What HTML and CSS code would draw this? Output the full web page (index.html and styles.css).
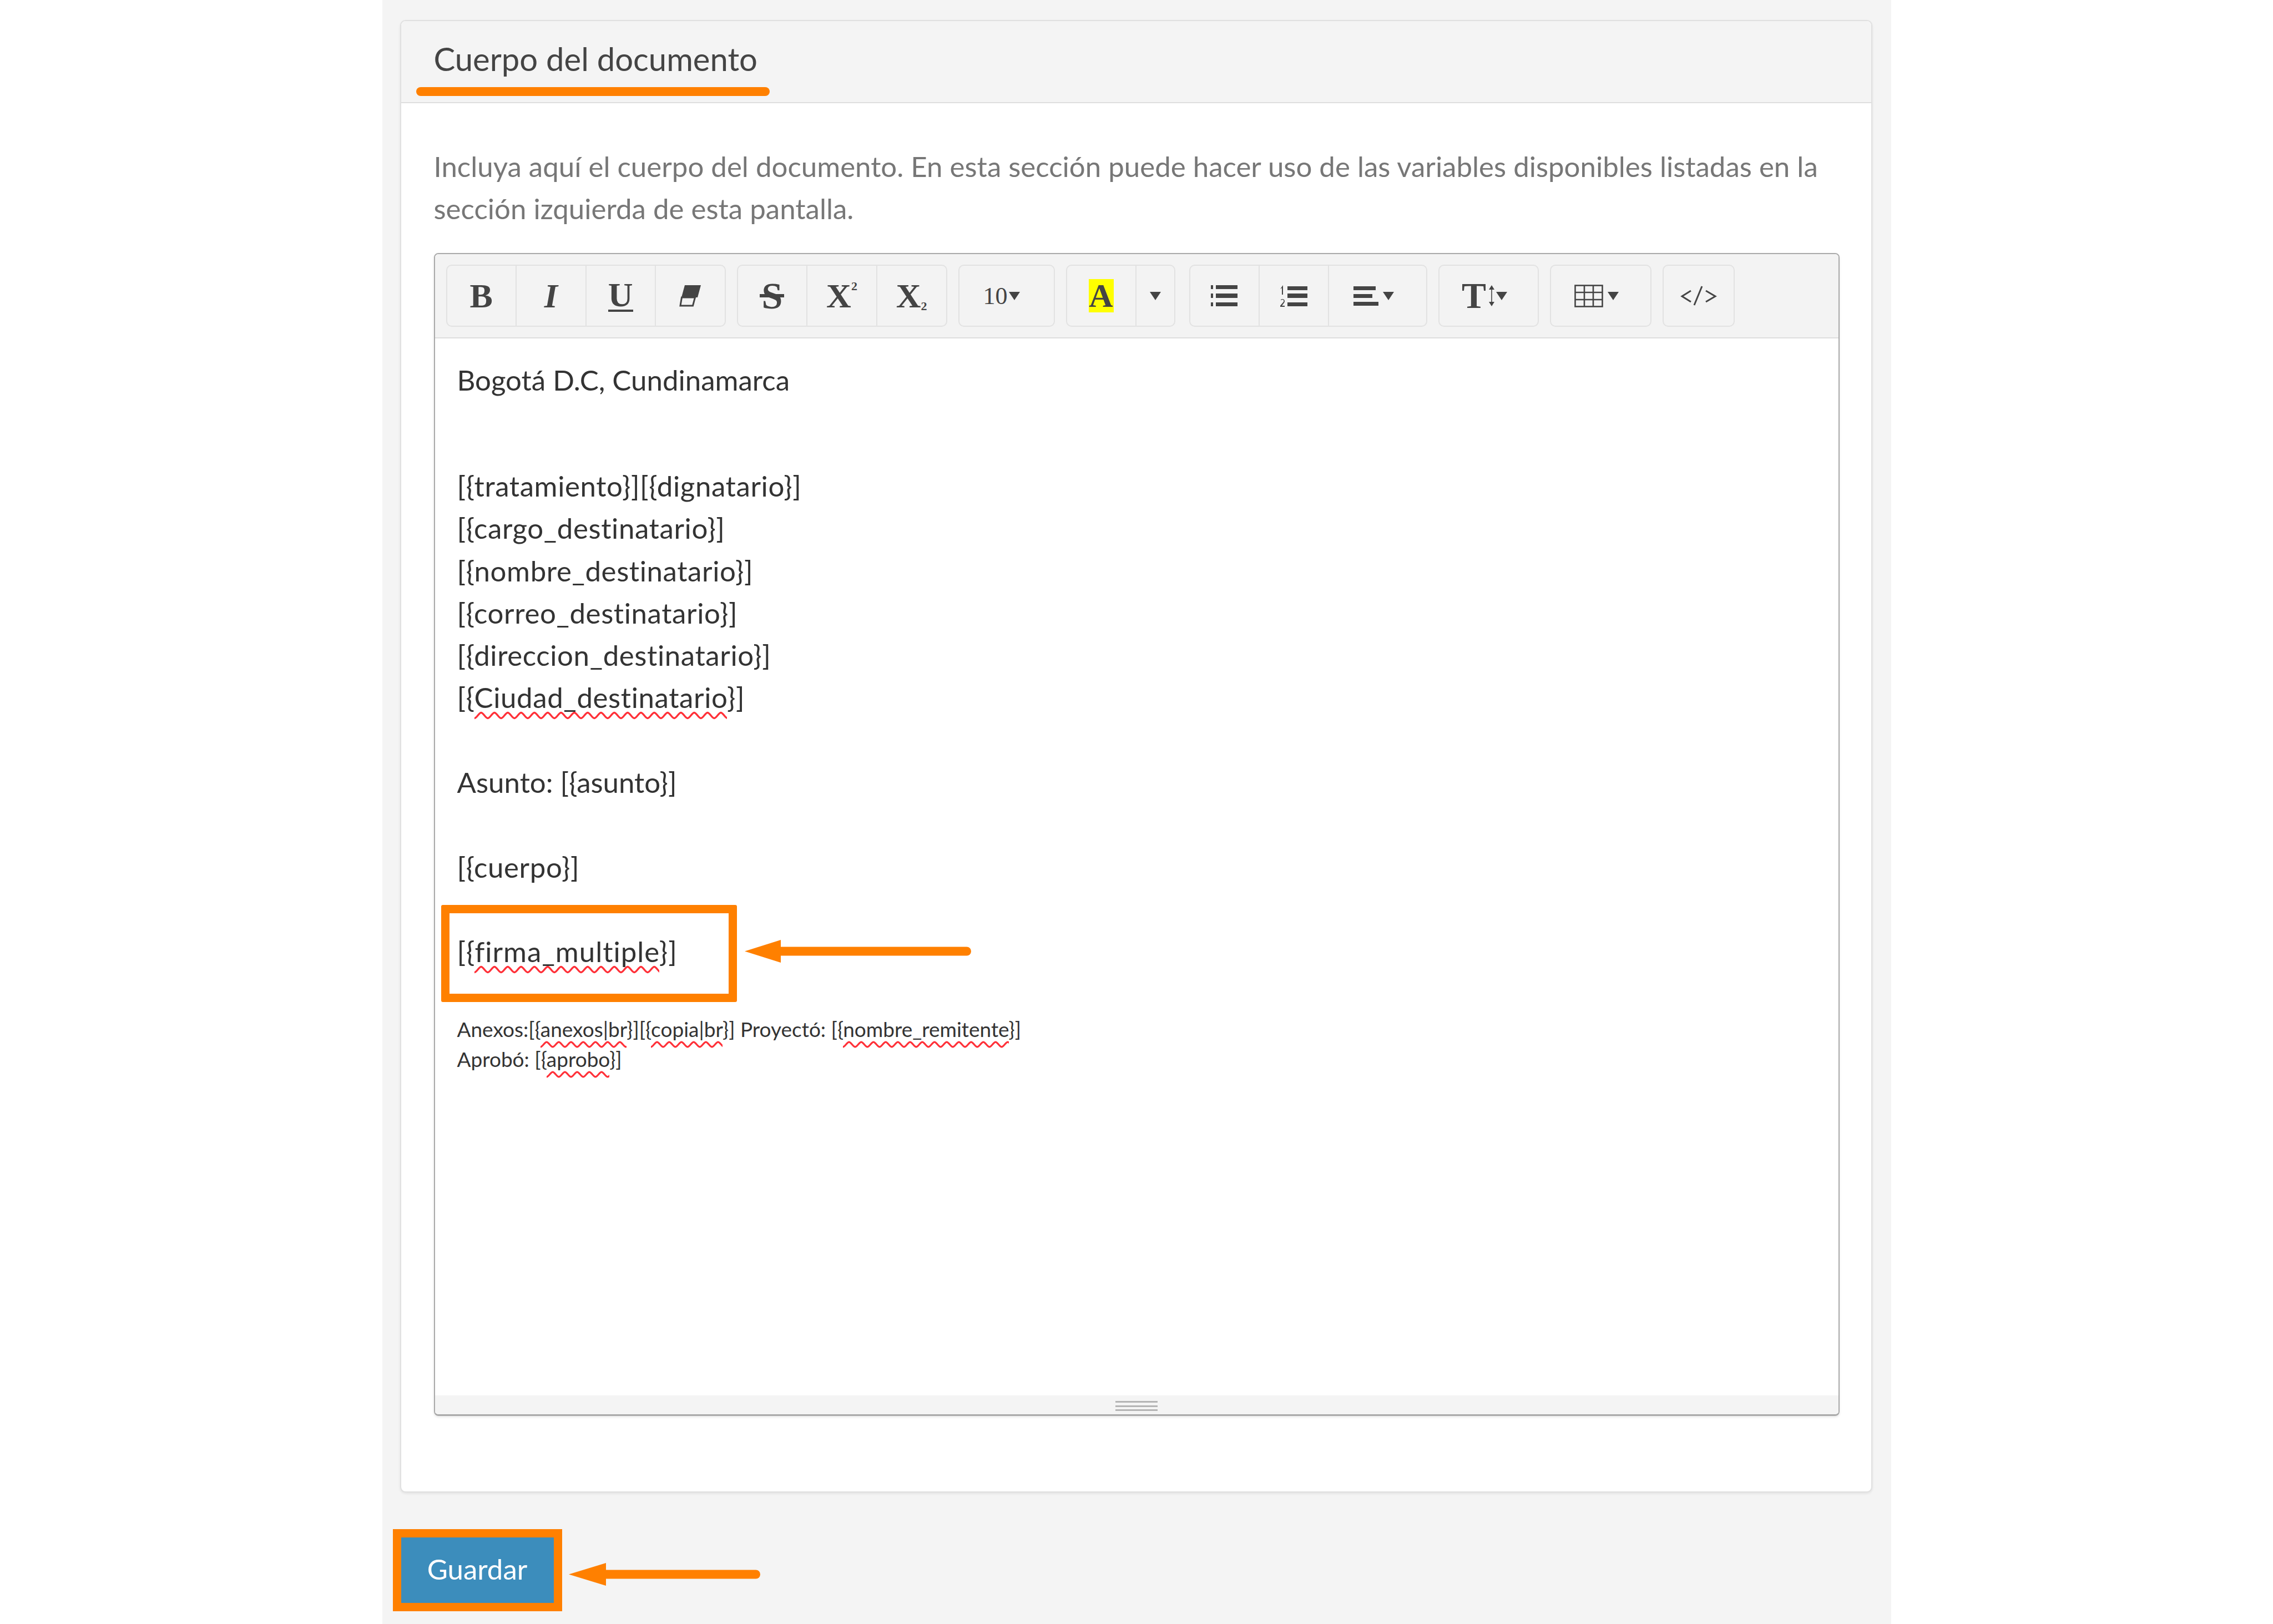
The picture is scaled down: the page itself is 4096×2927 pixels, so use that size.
FILE: index.html
```html
<!DOCTYPE html>
<html lang="es">
<head>
<meta charset="utf-8">
<title>Cuerpo del documento</title>
<link rel="stylesheet" href="styles.css">
</head>
<body>
<main class="page">
  <section class="card">
    <header class="card-head">
      <h2 class="card-title">Cuerpo del documento</h2>
      <span class="title-mark"></span>
    </header>
    <div class="card-body">
      <p class="help">Incluya aquí el cuerpo del documento. En esta sección puede hacer uso de las variables disponibles listadas en la sección izquierda de esta pantalla.</p>
      <div class="editor">
        <div class="toolbar">
          <div class="group g1">
            <button class="btn glyph">B</button>
            <button class="btn glyph italic">I</button>
            <button class="btn glyph"><span class="under">U</span></button>
            <button class="btn"><svg width="40" height="40" viewBox="0 0 40 40"><path d="M10 1h29l-6 22H4z" fill="#444"/><path d="M4.500 23h24l-4 15H2z" fill="none" stroke="#444" stroke-width="3"/></svg></button>
          </div>
          <div class="group g2">
            <button class="btn glyph"><span class="strike">S</span></button>
            <button class="btn glyph x">X<span class="sup">2</span></button>
            <button class="btn glyph x">X<span class="sub">2</span></button>
          </div>
          <div class="group g3">
            <button class="btn small-num">10<i class="caret"></i></button>
          </div>
          <div class="group g4">
            <button class="btn hl-btn"><span class="hl">A</span></button>
            <button class="btn hl-drop"><i class="caret"></i></button>
          </div>
          <div class="group g5">
            <button class="btn fixed"><svg width="48" height="40" viewBox="0 0 48 40" fill="#444"><rect x="0" y="1" width="4" height="7"/><rect x="9" y="1" width="39" height="7"/><rect x="0" y="16" width="4" height="8"/><rect x="9" y="16" width="39" height="8"/><rect x="0" y="32" width="4" height="7"/><rect x="9" y="32" width="39" height="7"/></svg></button>
            <button class="btn fixed"><svg width="50" height="40" viewBox="0 0 50 40" fill="#444"><path d="M6 1v17H4V6L1 8z"/><path d="M1 40v-2l6-7c1-2 0-4-2-4l-3 1v-1c3-2 7-1 7 3 0 2-2 4-5 8h5v2z"/><rect x="14" y="3" width="36" height="7"/><rect x="14" y="16" width="36" height="8"/><rect x="14" y="32" width="36" height="7"/></svg></button>
            <button class="btn pad-r"><svg width="45" height="37" viewBox="0 0 45 37" fill="#444"><rect x="0" y="1" width="40" height="7"/><rect x="0" y="15" width="34" height="7"/><rect x="0" y="29" width="45" height="7"/></svg><i class="caret"></i></button>
          </div>
          <div class="group g6">
            <button class="btn height-btn pad-r"><span class="tee">T</span><svg width="12" height="40" viewBox="0 0 12 40"><path d="M6 1l5 8H1zM6 39l-5-8h10z" fill="#444"/><path d="M6 5v30" stroke="#444" stroke-width="1.6"/></svg><i class="caret"></i></button>
          </div>
          <div class="group g7">
            <button class="btn pad-r"><svg width="52" height="41" viewBox="0 0 52 41" fill="none" stroke="#444" stroke-width="2.6"><rect x="1.5" y="1.5" width="49" height="38"/><path d="M1.500 14h49M1.500 27h49M18 1.500v38M34 1.500v38"/></svg><i class="caret"></i></button>
          </div>
          <div class="group g8">
            <button class="btn"><svg width="66" height="36" viewBox="0 0 66 36" fill="none" stroke="#444" stroke-width="3"><path d="M19 9L3 19l16 10M46 9l17 10-17 10M39 1L25 35"/></svg></button>
          </div>
        </div>
        <div class="content">
          <p class="line plain first">Bogotá D.C, Cundinamarca</p>
          <p class="line">&nbsp;</p>
          <p class="line">[{tratamiento}][{dignatario}]</p>
          <p class="line">[{cargo_destinatario}]</p>
          <p class="line">[{nombre_destinatario}]</p>
          <p class="line">[{correo_destinatario}]</p>
          <p class="line">[{direccion_destinatario}]</p>
          <p class="line">[{<span class="sp">Ciudad_destinatario</span>}]</p>
          <p class="line">&nbsp;</p>
          <p class="line plain">Asunto: [{asunto}]</p>
          <p class="line">&nbsp;</p>
          <p class="line">[{cuerpo}]</p>
          <p class="line">&nbsp;</p>
          <p class="line firma">[{<span class="sp">firma_multiple</span>}]
            <span class="callout"></span>
            <svg class="arrow arrow-firma" width="408" height="41" viewBox="0 0 408 41"><path d="M0 20.500L65 0v41z" fill="#ff8000"/><path d="M60 20.500h340" stroke="#ff8000" stroke-width="16" stroke-linecap="round"/></svg>
          </p>
          <p class="note">Anexos:[{<span class="sp sp-sm">anexos|br</span>}][{<span class="sp sp-sm">copia|br</span>}] Proyectó: [{<span class="sp sp-sm">nombre_remitente</span>}]<br>Aprobó: [{<span class="sp sp-sm">aprobo</span>}]</p>
        </div>
        <div class="statusbar">
          <div class="grip"><i></i><i></i><i></i></div>
        </div>
      </div>
    </div>
  </section>
  <div class="actions">
    <button class="save">Guardar</button>
    <svg class="arrow arrow-save" width="345" height="41" viewBox="0 0 345 41"><path d="M0 20.500L67 0v41z" fill="#ff8000"/><path d="M60 20.500h277" stroke="#ff8000" stroke-width="16" stroke-linecap="round"/></svg>
  </div>
</main>
</body>
</html>
```
FILE: styles.css
```css
* { box-sizing: border-box; }
html, body { margin: 0; padding: 0; background: #fff; }
body { font-family: Lato, "Noto Sans", sans-serif; color: #333; height: 2927px; overflow: hidden; }

.page {
  width: 2719px;
  height: 2927px;
  margin: 0 auto;
  padding: 36px 34px 0 32px;
  background: #f4f4f4;
}

.card {
  height: 2654px;
  background: #fff;
  border: 2px solid #e0e0e0;
  border-radius: 10px;
  box-shadow: 0 2px 4px rgba(0, 0, 0, .08);
}
.card-head {
  position: relative;
  height: 148px;
  padding: 0 0 0 59px;
  display: flex;
  align-items: center;
  background: #f4f4f4;
  border-bottom: 2px solid #dedede;
  border-radius: 8px 8px 0 0;
}
.card-title { margin: 0 0 11px; font-size: 58px; font-weight: 400; line-height: 1.2; color: #444; }
.title-mark {
  position: absolute;
  left: 27px;
  top: 119px;
  width: 637px;
  height: 16px;
  border-radius: 8px;
  background: #ff8000;
}

.card-body { padding: 76px 57px 0 59px; }
.help { margin: 0 0 43px; font-size: 51px; line-height: 75.7px; color: #777; }

.editor {
  height: 2096px;
  display: flex;
  flex-direction: column;
  border: 2px solid #a9a9a9;
  border-bottom-width: 3px;
  border-radius: 8px;
  box-shadow: 0 2px 4px rgba(0, 0, 0, .1);
  overflow: hidden;
}

.toolbar {
  flex: none;
  height: 152px;
  display: flex;
  gap: 20px;
  padding: 19px 0 0 20px;
  background: #f3f3f3;
  border-bottom: 2px solid #dedede;
}
.group {
  display: flex;
  height: 112px;
  border: 2px solid #e2e2e2;
  border-radius: 10px;
}
.g1 { width: 504px; }
.g2 { width: 379px; }
.g3 { width: 174px; }
.g4 { width: 197px; }
.g5 { width: 429px; margin-left: 5px; }
.g6 { width: 181px; }
.g7 { width: 183px; }
.g8 { width: 130px; }

.btn {
  flex: 1 1 0;
  display: flex;
  align-items: center;
  justify-content: center;
  gap: 8px;
  padding: 0;
  border: 0;
  border-right: 2px solid #e2e2e2;
  background: none;
  color: #444;
  font-family: "Liberation Serif", serif;
  font-weight: 700;
}
.btn:last-child { border-right: 0; }
.fixed { flex: none; width: 125px; }
.pad-r { padding-right: 14px; }

.glyph { font-size: 62px; line-height: 1; }
.italic { font-style: italic; }
.under { border-bottom: 4px solid #444; line-height: 54px; }
.strike { position: relative; font-size: 68px; }
.strike::after {
  content: "";
  position: absolute;
  left: -3px;
  right: -3px;
  top: 31px;
  height: 6px;
  background: #444;
}
.x { gap: 0; }
.sup { font-size: 22px; align-self: flex-start; margin-top: 26px; }
.sub { font-size: 22px; align-self: flex-end; margin-bottom: 24px; }
.small-num { font-size: 44px; font-weight: 400; gap: 2px; padding-right: 18px; }
.hl-btn { flex: none; width: 125px; }
.hl { display: block; width: 45px; height: 60px; background: #ff0; font-size: 60px; line-height: 60px; text-align: center; }
.hl-drop { flex: 1; }
.height-btn { gap: 2px; }
.tee { font-size: 66px; line-height: 1; margin-right: 2px; }

.caret {
  display: block;
  width: 0;
  height: 0;
  border-left: 10px solid transparent;
  border-right: 10px solid transparent;
  border-top: 15px solid #444;
}

.content { flex: 1; padding: 37px 40px 0; font-size: 51px; line-height: 76.3px; color: #333; }
.line { margin: 0; letter-spacing: .6px; }
.plain { letter-spacing: 0; }
.first { margin-bottom: 38px; }
.firma { position: relative; letter-spacing: 1px; }
.note { margin: 74px 0 0; font-size: 37px; line-height: 54px; }

.sp {
  padding-bottom: 11px;
  background: url("data:image/svg+xml,%3Csvg xmlns='http://www.w3.org/2000/svg' width='24' height='17'%3E%3Cpath d='M0 13.500C4 13.500 8 3.500 12 3.500S20 13.500 24 13.500' fill='none' stroke='%23ff3038' stroke-width='3.500'/%3E%3C/svg%3E") repeat-x left bottom;
}
.sp-sm {
  padding-bottom: 13px;
  background-size: 22px 15px;
}

.callout {
  position: absolute;
  left: -29px;
  top: -46px;
  width: 533px;
  height: 175px;
  border: 15px solid #ff8000;
  border-radius: 3px;
}
.arrow { position: absolute; display: block; }
.arrow-firma { left: 518px; top: 17px; }

.statusbar {
  flex: none;
  height: 34px;
  display: flex;
  justify-content: center;
  background: #f4f4f4;
  padding-top: 10px;
}
.grip { width: 76px; height: 18px; display: flex; flex-direction: column; justify-content: space-between; }
.grip i { display: block; height: 3px; background: #b4b4b4; }

.actions { position: relative; margin: 81px 0 0 2px; }
.save {
  display: block;
  width: 275px;
  height: 118px;
  padding: 0 0 6px;
  border: 0;
  background: #3c8dbc;
  outline: 15px solid #ff8000;
  font-family: inherit;
  font-size: 51px;
  color: #fff;
}
.arrow-save { left: 302px; top: 46px; }
```
